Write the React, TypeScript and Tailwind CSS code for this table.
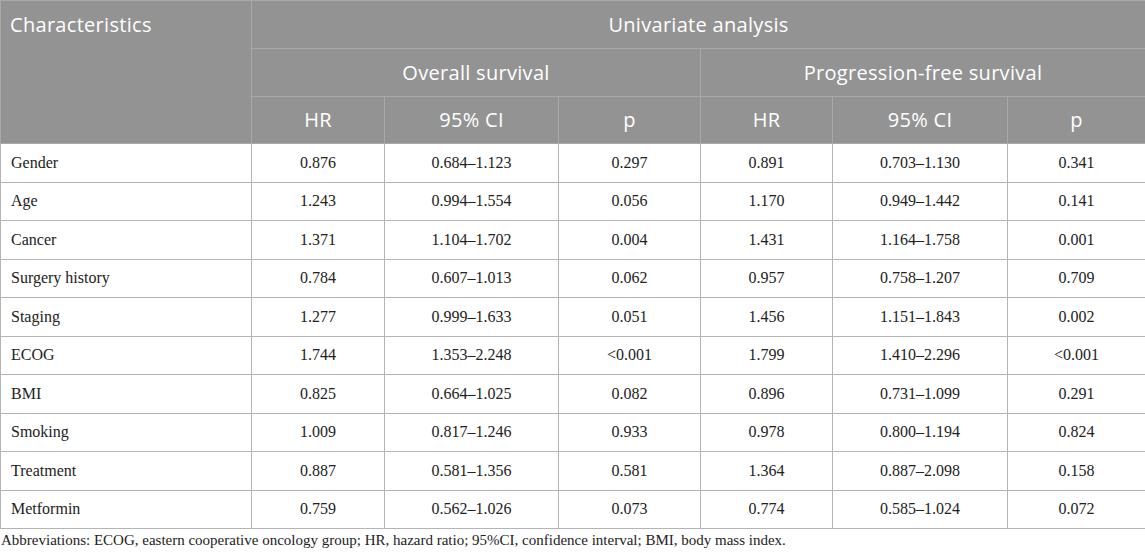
const rows = [
  ["Gender", "0.876", "0.684–1.123", "0.297", "0.891", "0.703–1.130", "0.341"],
  ["Age", "1.243", "0.994–1.554", "0.056", "1.170", "0.949–1.442", "0.141"],
  ["Cancer", "1.371", "1.104–1.702", "0.004", "1.431", "1.164–1.758", "0.001"],
  ["Surgery history", "0.784", "0.607–1.013", "0.062", "0.957", "0.758–1.207", "0.709"],
  ["Staging", "1.277", "0.999–1.633", "0.051", "1.456", "1.151–1.843", "0.002"],
  ["ECOG", "1.744", "1.353–2.248", "<0.001", "1.799", "1.410–2.296", "<0.001"],
  ["BMI", "0.825", "0.664–1.025", "0.082", "0.896", "0.731–1.099", "0.291"],
  ["Smoking", "1.009", "0.817–1.246", "0.933", "0.978", "0.800–1.194", "0.824"],
  ["Treatment", "0.887", "0.581–1.356", "0.581", "1.364", "0.887–2.098", "0.158"],
  ["Metformin", "0.759", "0.562–1.026", "0.073", "0.774", "0.585–1.024", "0.072"],
];

const head = "border border-[#a9a9a9] text-white font-normal";
const cell = "border border-[#b4b4b4] text-center";

export default function App() {
  return (
    <div className="w-[1145px] h-[553px] bg-white overflow-hidden">
      <table className="w-[1145px] border-collapse table-fixed">
        <colgroup>
          <col className="w-[251px]" />
          <col className="w-[133px]" />
          <col className="w-[174px]" />
          <col className="w-[142px]" />
          <col className="w-[132px]" />
          <col className="w-[175px]" />
          <col className="w-[138px]" />
        </colgroup>
        <thead className="bg-[#939393] text-[20px] tracking-[0.3px] font-['Open_Sans',sans-serif]">
          <tr className="h-[48px]">
            <th rowSpan={3} className={`${head} text-left align-top px-[9px] pt-[9px]`}>
              Characteristics
            </th>
            <th colSpan={6} className={head}>Univariate analysis</th>
          </tr>
          <tr className="h-[48px]">
            <th colSpan={3} className={head}>Overall survival</th>
            <th colSpan={3} className={head}>Progression-free survival</th>
          </tr>
          <tr className="h-[47px]">
            <th className={head}>HR</th>
            <th className={head}>95% CI</th>
            <th className={head}>p</th>
            <th className={head}>HR</th>
            <th className={head}>95% CI</th>
            <th className={head}>p</th>
          </tr>
        </thead>
        <tbody className="text-[16px] text-[#222] font-['Liberation_Serif',serif]">
          {rows.map((r) => (
            <tr key={r[0]} className="h-[38.5px]">
              <td className="border border-[#b4b4b4] px-[10px]">{r[0]}</td>
              {r.slice(1).map((v, i) => (
                <td key={i} className={cell}>
                  {v}
                </td>
              ))}
            </tr>
          ))}
        </tbody>
      </table>
      <p className="mt-[2px] pl-[1px] text-[15px] leading-[18px] text-[#222] font-['Liberation_Serif',serif]">
        Abbreviations: ECOG, eastern cooperative oncology group; HR, hazard ratio; 95%CI, confidence interval; BMI,
        body mass index.
      </p>
    </div>
  );
}
